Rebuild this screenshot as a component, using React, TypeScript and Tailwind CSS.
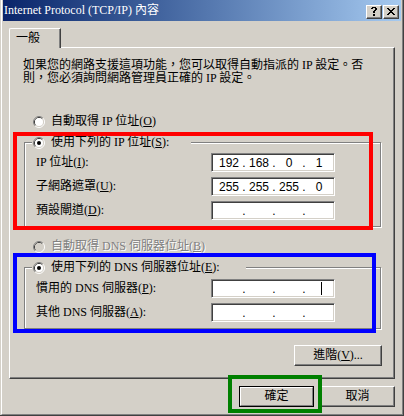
import React from 'react';

function Radio({ checked, disabled }: { checked?: boolean; disabled?: boolean }) {
  return (
    <svg width="12" height="12" viewBox="0 0 12 12" className="shrink-0">
      <path d="M2.11 9.89A5.5 5.5 0 0 1 9.89 2.11" stroke="#808080" fill="none" />
      <path d="M9.89 2.11A5.5 5.5 0 0 1 2.11 9.89" stroke="#ffffff" fill="none" />
      <path d="M2.82 9.18A4.5 4.5 0 0 1 9.18 2.82" stroke="#404040" fill="none" />
      <path d="M9.18 2.82A4.5 4.5 0 0 1 2.82 9.18" stroke="#d4d0c8" fill="none" />
      <circle cx="6" cy="6" r="4" fill={disabled ? '#d4d0c8' : '#ffffff'} />
      {checked && <circle cx="6" cy="6" r="2" fill="#000000" />}
    </svg>
  );
}

function IpBox({ parts, caret }: { parts: string[]; caret?: boolean }) {
  return (
    <div className="w-[124px] h-[19px] bg-white border border-t-[#808080] border-l-[#808080] border-r-white border-b-white shadow-[inset_1px_1px_0_#404040,inset_-1px_-1px_0_#d4d0c8] flex items-center pl-[5px] font-['Liberation_Sans',sans-serif] text-[12px] leading-none text-black">
      {parts.map((p, i) => (
        <React.Fragment key={i}>
          {i > 0 && <span className="w-[6px] text-center">.</span>}
          <span className="relative w-[24px] h-[13px] flex items-center justify-center">
            {p}
            {caret && i === 3 && <span className="absolute left-[14px] top-0 w-[1px] h-[13px] bg-black" />}
          </span>
        </React.Fragment>
      ))}
    </div>
  );
}

function Row({ label, parts, caret }: { label: React.ReactNode; parts: string[]; caret?: boolean }) {
  return (
    <div className="flex items-center">
      <div className="w-[175px] text-[12px] leading-[13px] whitespace-nowrap">{label}</div>
      <IpBox parts={parts} caret={caret} />
    </div>
  );
}

function CapBtn({ children }: { children: React.ReactNode }) {
  return (
    <div className="w-[16px] h-[14px] bg-[#d4d0c8] border border-t-white border-l-white border-r-[#404040] border-b-[#404040] shadow-[inset_-1px_-1px_0_#808080]">
      <svg width="14" height="12" viewBox="0 0 14 12" shapeRendering="crispEdges">
        {children}
      </svg>
    </div>
  );
}

export default function App() {
  return (
    <div className="w-[404px] h-[416px] bg-[#d4d0c8] pl-[1px] border-r border-b border-[#404040] text-black font-['Liberation_Serif','Noto_Sans_CJK_TC',serif] text-[12px] relative overflow-hidden">
      <div className="h-full border-l border-r border-b border-l-white border-r-[#808080] border-b-[#808080] px-[1px] flex flex-col">
        {/* caption */}
        <div className="h-[21px] shrink-0 bg-linear-to-r from-[#0a246a] to-[#a6caf0] flex items-start">
          <div className="pl-[1px] pt-[4px] text-white text-[12px] leading-[13px] whitespace-nowrap flex-1">
            Internet Protocol (TCP/IP) 內容
          </div>
          <div className="flex gap-[1px] pt-[5px] pr-[2px]">
            <CapBtn>
              <path d="M5 1h4v1H5zM4 2h2v1H4zM8 2h2v2H8zM7 4h2v1H7zM6 5h2v2H6zM6 8h2v2H6z" fill="#000" />
            </CapBtn>
            <CapBtn>
              <path d="M3 2h2v1H3zM9 2h2v1H9zM4 3h2v1H4zM8 3h2v1H8zM5 4h4v1H5zM6 5h2v1H6zM5 6h4v1H5zM4 7h2v1H4zM8 7h2v1H8zM3 8h2v1H3zM9 8h2v1H9z" fill="#000" />
            </CapBtn>
          </div>
        </div>

        {/* body */}
        <div className="flex-1 px-[6px] pt-[7px] flex flex-col">
          <div className="relative z-10 w-[52px] h-[20px] bg-[#d4d0c8] border-l border-t border-r border-l-white border-t-white border-r-[#404040] shadow-[inset_-1px_0_0_#808080] rounded-tl-[2px] pl-[6px] pt-[3px] leading-[13px]">
            一般
          </div>
          <div className="-mt-[1px] h-[332px] border border-t-white border-l-white border-r-[#404040] border-b-[#404040] shadow-[inset_-1px_-1px_0_#808080] flex flex-col">
            <p className="ml-[13px] mt-[11px] leading-[13px] whitespace-nowrap">
              如果您的網路支援這項功能，您可以取得自動指派的 IP 設定。否
              <br />
              則，您必須詢問網路管理員正確的 IP 設定。
            </p>

            <div className="ml-[23px] mt-[30px] h-[13px] flex items-center gap-[6px] leading-[13px]">
              <Radio />
              <span>自動取得 IP 位址(<u>O</u>)</span>
            </div>

            <div className="relative ml-[14px] mt-[14px] w-[357px] border border-[#808080] shadow-[inset_1px_1px_0_#ffffff,1px_1px_0_#ffffff] pt-[10px] pl-[11px] pb-[6px] flex flex-col gap-[5px]">
              <div className="absolute left-[7px] -top-[7px] w-[159px] h-[13px] bg-[#d4d0c8] pl-[1px] flex items-center gap-[6px] leading-[13px]">
                <Radio checked />
                <span className="whitespace-nowrap">使用下列的 IP 位址(<u>S</u>):</span>
              </div>
              <Row label={<>IP 位址(<u>I</u>):</>} parts={['192', '168', '0', '1']} />
              <Row label={<>子網路遮罩(<u>U</u>):</>} parts={['255', '255', '255', '0']} />
              <Row label={<>預設閘道(<u>D</u>):</>} parts={['', '', '', '']} />
            </div>

            <div className="ml-[23px] mt-[13px] h-[13px] flex items-center gap-[6px] leading-[13px]">
              <Radio disabled />
              <span className="text-[#808080] [text-shadow:1px_1px_0_#ffffff]">自動取得 DNS 伺服器位址(<u>B</u>)</span>
            </div>

            <div className="relative ml-[14px] mt-[14px] w-[357px] border border-[#808080] shadow-[inset_1px_1px_0_#ffffff,1px_1px_0_#ffffff] pt-[11px] pl-[11px] pb-[6px] flex flex-col gap-[5px]">
              <div className="absolute left-[7px] -top-[7px] w-[214px] h-[13px] bg-[#d4d0c8] pl-[1px] flex items-center gap-[6px] leading-[13px]">
                <Radio checked />
                <span className="whitespace-nowrap">使用下列的 DNS 伺服器位址(<u>E</u>):</span>
              </div>
              <Row label={<>慣用的 DNS 伺服器(<u>P</u>):</>} parts={['', '', '', '']} caret />
              <Row label={<>其他 DNS 伺服器(<u>A</u>):</>} parts={['', '', '', '']} />
            </div>

            <div className="self-end mr-[12px] mt-[16px] w-[88px] h-[21px] border border-t-white border-l-white border-r-[#404040] border-b-[#404040] shadow-[inset_-1px_-1px_0_#808080] flex items-center justify-center leading-[13px]">
              進階(<u>V</u>)...
            </div>
          </div>

          <div className="mt-[7px] flex justify-end gap-[6px]">
            <div className="w-[75px] h-[21px] border border-black">
              <div className="h-full border border-t-white border-l-white border-r-[#808080] border-b-[#808080] flex items-center justify-center leading-[13px]">
                確定
              </div>
            </div>
            <div className="w-[75px] h-[21px] border border-t-white border-l-white border-r-[#404040] border-b-[#404040] shadow-[inset_-1px_-1px_0_#808080] flex items-center justify-center leading-[13px]">
              取消
            </div>
          </div>
        </div>
      </div>

      {/* annotation boxes */}
      <div className="absolute left-[13px] top-[132px] w-[360px] h-[98px] border-4 border-[#ff0000] pointer-events-none" />
      <div className="absolute left-[13px] top-[253px] w-[363px] h-[80px] border-4 border-[#0000ff] pointer-events-none" />
      <div className="absolute left-[228px] top-[375px] w-[94px] h-[38px] border-4 border-[#008000] pointer-events-none" />
    </div>
  );
}
